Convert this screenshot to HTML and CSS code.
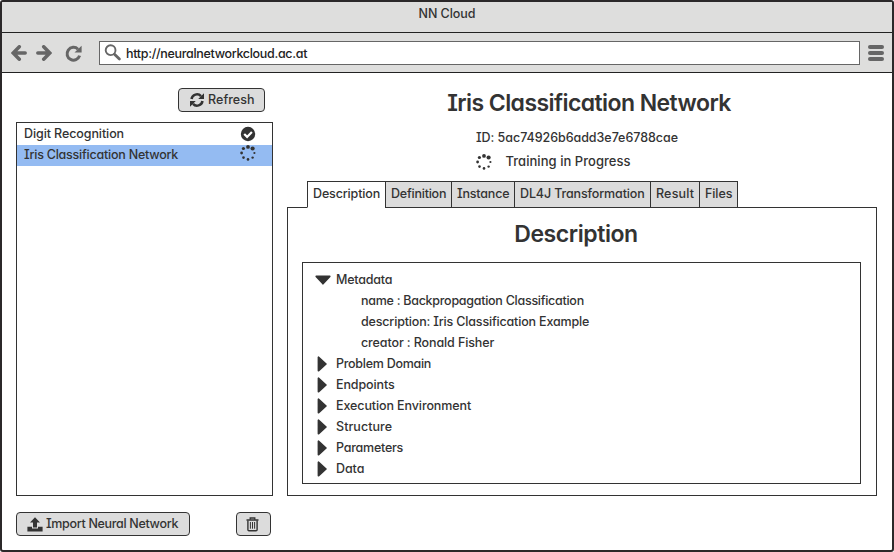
FILE: index.html
```html
<!DOCTYPE html>
<html lang="en">
<head>
<meta charset="utf-8">
<title>NN Cloud</title>
<link rel="stylesheet" href="styles.css">
</head>
<body>
<svg class="defs" width="0" height="0">
  <symbol id="spinner" viewBox="0 0 16 16">
    <circle cx="8" cy="1.9" r="1.9"/><circle cx="12.6" cy="3.5" r="2.1"/><circle cx="14.4" cy="8" r="1.1"/><circle cx="12.6" cy="12.6" r="1.2"/>
    <circle cx="8" cy="14.4" r="1.3"/><circle cx="3.5" cy="12.6" r="1.3"/><circle cx="1.6" cy="8" r="1.4"/><circle cx="3.4" cy="3.5" r="1.6"/>
  </symbol>
  <symbol id="arrow" viewBox="0 0 16 16">
    <path d="M8.3 1.8 2.2 8l6.1 6.2M2.6 8h11.6" fill="none" stroke="currentColor" stroke-width="3.5" stroke-linecap="round"/>
  </symbol>
  <symbol id="closed" viewBox="0 0 10 16"><path d="M1.4 1.2v13.6L9 8z" stroke="currentColor" stroke-width="1.6" stroke-linejoin="round"/></symbol>
  <symbol id="open" viewBox="0 0 16 10"><path d="M1.2 1.4h13.6L8 8.8z" stroke="currentColor" stroke-width="1.6" stroke-linejoin="round"/></symbol>
</svg>
<div class="window">
  <header class="titlebar"><span class="t-title">NN Cloud</span></header>
  <nav class="toolbar">
    <svg class="back" width="16" height="16"><use href="#arrow"/></svg>
    <svg class="forward" width="16" height="16"><use href="#arrow"/></svg>
    <svg class="reload" width="17" height="16" viewBox="0 0 17 16"><path d="M13 4.2A6.400 6.400 0 1 0 14.6 10.6" fill="none" stroke="currentColor" stroke-width="3"/><path d="M16.600.8v6.600H9.500z"/></svg>
    <div class="address">
      <svg width="17" height="17" viewBox="0 0 17 17"><circle cx="5.600" cy="6.200" r="4.900" fill="none" stroke="currentColor" stroke-width="1.900"/><path d="m9.500 10.200 4.900 4.900" stroke="currentColor" stroke-width="2.800" stroke-linecap="round"/></svg>
      <span class="t-url">http://neuralnetworkcloud.ac.at</span>
    </div>
    <div class="menu"><i></i><i></i><i></i></div>
  </nav>
  <main class="content">
    <aside class="sidebar">
      <button class="btn refresh">
        <svg width="14" height="14" viewBox="0 0 14 14"><path d="M1.500 6A5.500 5.500 0 0 1 11 3.200M12.500 8A5.500 5.500 0 0 1 3 10.800" fill="none" stroke="currentColor" stroke-width="2.500"/><path d="M14 .2v5.700H8.200zM0 13.800V8.100h5.800z"/></svg>
        <span class="t-refresh">Refresh</span>
      </button>
      <ul class="networks">
        <li><span class="t-digit">Digit Recognition</span>
          <svg width="16" height="16" viewBox="0 0 16 16"><circle cx="8" cy="8" r="7.200"/><path d="m4.200 8 2.900 2.900 4.800-5" fill="none" stroke="#fff" stroke-width="2.200"/></svg></li>
        <li class="selected"><span class="t-iris">Iris Classification Network</span>
          <svg width="16" height="16"><use href="#spinner"/></svg></li>
      </ul>
      <div class="actions">
        <button class="btn import">
          <svg width="16" height="15" viewBox="0 0 16 15"><path d="M8 .2 13 5.400H10v5H6v-5H3z"/><path d="M.4 9.800h4.600v1.700h6V9.800h4.600v4.700H.4z"/></svg>
          <span class="t-import">Import Neural Network</span>
        </button>
        <button class="btn trash" aria-label="Delete">
          <svg width="13" height="15" viewBox="0 0 13 15"><g fill="none" stroke="currentColor"><path d="M.5 3h12" stroke-width="1.500"/><path d="M4.200 2.800V1h4.600v1.800" stroke-width="1.300"/><path d="M1.900 3.500v9.200q0 1.100 1.100 1.100h7q1.100 0 1.100-1.100V3.500" stroke-width="1.400"/><path d="M4.400 5v6.700M6.500 5v6.700M8.600 5v6.700" stroke-width="1"/></g></svg>
        </button>
      </div>
    </aside>
    <section class="detail">
      <h1>Iris Classification Network</h1>
      <p class="id t-id">ID: 5ac74926b6add3e7e6788cae</p>
      <p class="status"><svg width="16" height="16"><use href="#spinner"/></svg><span>Training in Progress</span></p>
      <div class="tabs">
        <div class="tab active t-tab1">Description</div>
        <div class="tab t-tab2">Definition</div>
        <div class="tab t-tab3">Instance</div>
        <div class="tab t-tab4">DL4J Transformation</div>
        <div class="tab t-tab5">Result</div>
        <div class="tab t-tab6">Files</div>
      </div>
      <div class="panel">
        <h2>Description</h2>
        <ul class="tree">
          <li><svg width="16" height="10"><use href="#open"/></svg><span class="t-meta">Metadata</span></li>
          <li class="leaf t-name">name : Backpropagation Classification</li>
          <li class="leaf t-desc">description: Iris Classification Example</li>
          <li class="leaf t-creator">creator : Ronald Fisher</li>
          <li><svg width="10" height="16"><use href="#closed"/></svg><span class="t-problem">Problem Domain</span></li>
          <li><svg width="10" height="16"><use href="#closed"/></svg><span class="t-end">Endpoints</span></li>
          <li><svg width="10" height="16"><use href="#closed"/></svg><span class="t-exec">Execution Environment</span></li>
          <li><svg width="10" height="16"><use href="#closed"/></svg><span class="t-struct">Structure</span></li>
          <li><svg width="10" height="16"><use href="#closed"/></svg><span class="t-param">Parameters</span></li>
          <li><svg width="10" height="16"><use href="#closed"/></svg><span class="t-data">Data</span></li>
        </ul>
      </div>
    </section>
  </main>
</div>
</body>
</html>
```
FILE: styles.css
```css
* { box-sizing: border-box; margin: 0; padding: 0; }
body {
  color: #333;
  font: 500 12.5px/21px Inter, "Liberation Sans", sans-serif;
  font-feature-settings: "cv11", "cv08";
  white-space: nowrap;
}
svg { fill: currentColor; flex: none; overflow: visible; }
.defs { position: absolute; }
ul { list-style: none; }

.window {
  display: flex; flex-direction: column;
  width: 894px; height: 552px;
  border: 2px solid #2b2829; border-radius: 3px;
  background: #fff; overflow: hidden;
}
.titlebar { height: 31px; background: #dededd; border-bottom: 1px solid #222; text-align: center; padding-top: 1px; }
.toolbar {
  display: flex; align-items: center;
  height: 40px; padding: 0 8px 0 9px;
  color: #666; background: #dededd; border-bottom: 1px solid #222;
}
.forward { transform: scaleX(-1); margin-left: 9px; }
.reload { margin-left: 13px; }
.address {
  display: flex; align-items: center;
  width: 761px; height: 24px; margin-left: 17px; padding-left: 5px;
  background: #fff; border: 1px solid #666;
}
.address span { margin: 1px 0 0 4px; color: #222; }
.menu { display: grid; gap: 2px; margin-left: 8px; }
.menu i { width: 16px; height: 4px; border-radius: 2px; background: #666; }

.content { display: flex; flex: 1; padding: 15px 15px 0 14px; }
.sidebar { display: flex; flex-direction: column; width: 257px; margin-right: 14px; }
.btn {
  display: flex; align-items: center; height: 24px;
  font: inherit; font-feature-settings: inherit; color: #333;
  background: #dcdcdc; border: 1px solid #333; border-radius: 4px;
}
.btn span { margin-top: -1px; }
.refresh { width: 87px; margin-left: 162px; padding-left: 11px; gap: 4px; }
.networks { height: 374px; margin-top: 10px; padding-top: 1px; border: 1px solid #333; }
.networks li { display: flex; justify-content: space-between; align-items: center; height: 21px; padding: 0 16px 0 7px; }
.networks span { margin-top: -2px; }
.networks svg { margin-top: -1px; }
.networks .selected { background: #94bbf2; }
.networks .selected svg { margin-top: -5px; }
.actions { display: flex; justify-content: space-between; margin-top: 16px; padding-right: 2px; }
.import { width: 174px; padding-left: 10px; gap: 3px; }
.trash { width: 35px; justify-content: center; padding-right: 3px; }

.detail { width: 590px; }
h1, h2 { font-size: 23px; font-weight: 600; line-height: 26px; text-align: center; }
h1 { letter-spacing: -.57px; padding-left: 14px; margin-top: 2px; }
h2 { letter-spacing: -.43px; padding: 13px 11px 15px 0; height: 54px; }
.id { margin: 11px 0 0 189px; }
.status { display: flex; align-items: center; margin: 3px 0 0 189px; font-size: 13px; letter-spacing: .04px; }
.status span { margin-left: 13.5px; }
.tabs { display: flex; height: 27px; margin: 9px 0 -1px 20px; position: relative; }
.tab { height: 27px; padding: 1px 0 0 5px; border: 1px solid #333; margin-right: -1px; background: #dcdcdc; }
.tab.active { background: #fff; border-bottom-color: #fff; }
.panel { height: 289px; padding: 0 15px 0 14px; border: 1px solid #333; }
.tree { height: 222px; padding: 6px 0 0 11px; border: 1px solid #333; }
.tree li { display: flex; align-items: center; height: 21px; }
.tree svg[height="16"] { margin: 0 9px 0 3px; }
.tree svg[height="10"] { margin: 0 5px 0 1px; }
.tree .leaf { padding-left: 47px; }

/* Tab widths */
.t-tab1 { width: 79px; letter-spacing: -.14px; }
.t-tab2 { width: 67px; letter-spacing: -.22px; }
.t-tab3 { width: 64px; letter-spacing: -.19px; }
.t-tab4 { width: 137px; letter-spacing: -.13px; }
.t-tab5 { width: 50px; letter-spacing: .18px; }
.t-tab6 { width: 39px; letter-spacing: -.08px; }

/* Tracking */
.t-title { letter-spacing: -.045px; }
.t-url { letter-spacing: -.31px; }
.t-refresh { letter-spacing: .06px; }
.t-digit { letter-spacing: -.09px; }
.t-iris { letter-spacing: -.225px; }
.t-import { letter-spacing: -.32px; }
.t-id { letter-spacing: -.045px; }
.t-meta { letter-spacing: -.22px; }
.t-name { letter-spacing: -.27px; }
.t-desc { letter-spacing: -.17px; }
.t-creator { letter-spacing: -.11px; }
.t-problem { letter-spacing: -.27px; }
.t-end { letter-spacing: -.11px; }
.t-exec { letter-spacing: -.1px; }
.t-struct { letter-spacing: .06px; }
.t-param { letter-spacing: -.24px; }
.t-data { letter-spacing: -.08px; }
```
